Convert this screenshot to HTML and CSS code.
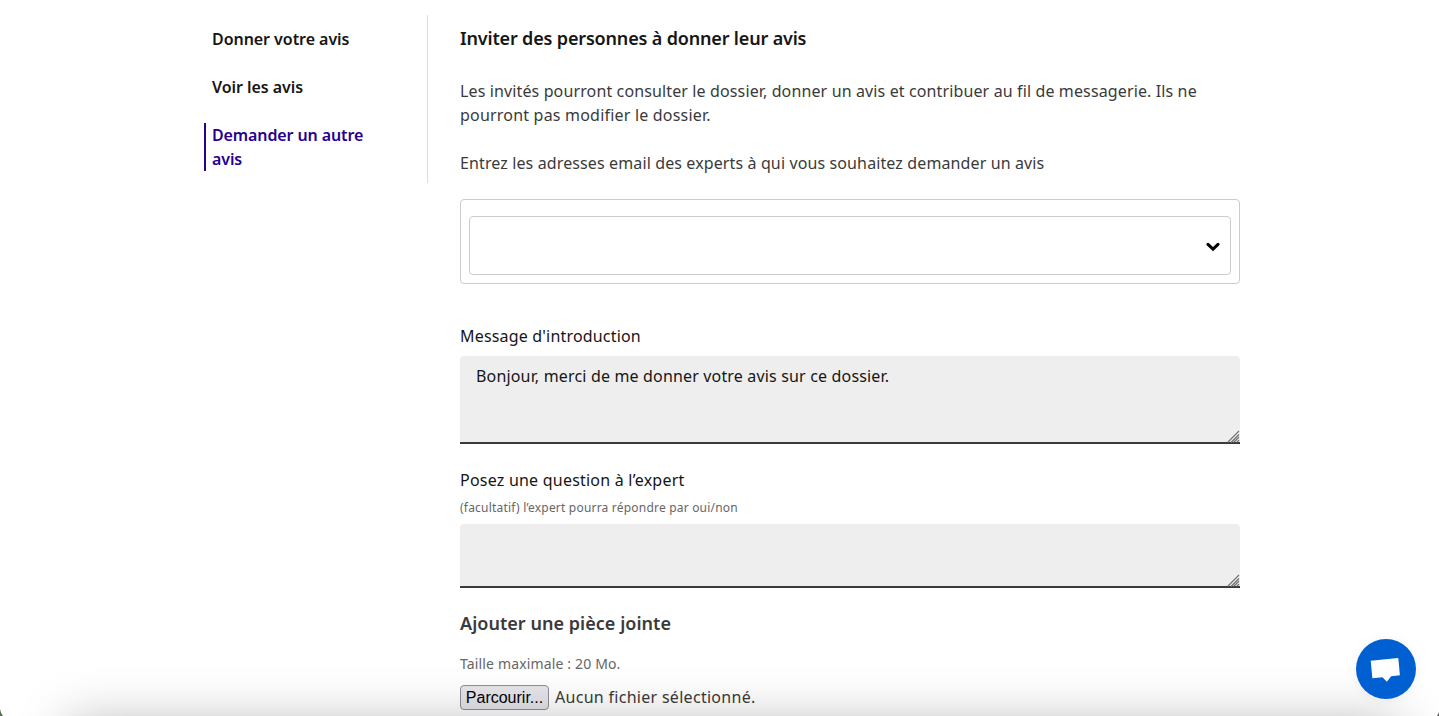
FILE: index.html
```html
<!DOCTYPE html>
<html lang="fr">
<head>
<meta charset="utf-8">
<title>Demander un autre avis</title>
<link rel="stylesheet" href="styles.css">
</head>
<body>
<div class="page">
  <nav class="sidemenu">
    <a class="item"><span class="t-nav1">Donner votre avis</span></a>
    <a class="item"><span class="t-nav2">Voir les avis</span></a>
    <a class="item active"><span class="t-nav3">Demander un autre<br>avis</span></a>
  </nav>
  <main class="content">
    <h1 class="title"><span class="t-title">Inviter des personnes à donner leur avis</span></h1>
    <p class="para"><span class="t-p1">Les invités pourront consulter le dossier, donner un avis et contribuer au fil de messagerie. Ils ne</span><br><span class="t-p2">pourront pas modifier le dossier.</span></p>
    <p class="para"><span class="t-p3">Entrez les adresses email des experts à qui vous souhaitez demander un avis</span></p>
    <div class="combo"><div class="combo-input">
      <svg class="chevron" width="14" height="10" viewBox="0 0 14 10"><path d="M2 2.3 7 7.1 12 2.3" fill="none" stroke="#000" stroke-width="3" stroke-linecap="round"/></svg>
    </div></div>
    <label class="label intro"><span class="t-l1">Message d'introduction</span></label>
    <div class="area area-intro"><span class="t-area">Bonjour, merci de me donner votre avis sur ce dossier.</span>
      <svg class="grip" width="13" height="13" viewBox="0 0 13 13"><path d="M0.5 12.5 12 1M4 12.5 12 4.5M6.5 12.5 12 7M9.5 12.5 12 10" stroke="#707070" stroke-width="1.1" fill="none"/></svg>
    </div>
    <label class="label question"><span class="t-l2">Posez une question à l’expert</span></label>
    <p class="hint"><span class="t-hint">(facultatif) l’expert pourra répondre par oui/non</span></p>
    <div class="area area-question">
      <svg class="grip" width="13" height="13" viewBox="0 0 13 13"><path d="M0.5 12.5 12 1M4 12.5 12 4.5M6.5 12.5 12 7M9.5 12.5 12 10" stroke="#707070" stroke-width="1.1" fill="none"/></svg>
    </div>
    <h2 class="subtitle"><span class="t-sub">Ajouter une pièce jointe</span></h2>
    <p class="size"><span class="t-size">Taille maximale : 20 Mo.</span></p>
    <div class="file"><button class="browse"><span>Parcourir...</span></button><span class="t-file">Aucun fichier sélectionné.</span></div>
  </main>
</div>
<div class="shade"><div class="shade-source"></div></div>
<div class="chat"><svg width="60" height="60" viewBox="0 0 60 60"><path d="M14.7 21.8 42.3 18.9 43.9 36.3 35.2 37.3 30.8 42.8 26.5 38.3 16.4 39.2Z" fill="#fff"/></svg></div>
<svg class="corner left" width="4" height="8" viewBox="0 0 4 8"><path d="M0 1Q.6 5 3 8H0Z" fill="#566d56"/></svg>
<svg class="corner right" width="4" height="8" viewBox="0 0 4 8"><path d="M4 4Q3.4 6 2 8H4Z" fill="#555"/></svg>
</body>
</html>
```
FILE: styles.css
```css
* { box-sizing: border-box; }
body {
  margin: 0;
  height: 716px;
  overflow: hidden;
  position: relative;
  background: #fff;
  color: #3a3a3a;
  font: 16px/24px "Noto Sans", sans-serif;
}
h1, h2, p { margin: 0; }
span { white-space: nowrap; }
.page { display: flex; width: 1036px; margin-left: 204px; padding-top: 15px; }
.sidemenu {
  display: flex;
  flex-direction: column;
  gap: 24px;
  width: 224px;
  height: 168px;
  padding-top: 12px;
  border-right: 1px solid #ddd;
  color: #161616;
  font-weight: 600;
}
.item { display: block; padding-left: 8px; }
.item.active { padding-left: 6px; border-left: 2px solid #270092; color: #270092; }
.content { width: 780px; margin-left: 32px; }
.title { margin: 11px 0 29px; color: #161616; font-size: 18px; line-height: 24px; font-weight: 600; }
.para { margin-bottom: 24px; }
.combo { height: 85px; padding: 16px 8px 8px; border: 1px solid #ccc; border-radius: 4px; }
.combo-input {
  display: flex;
  align-items: center;
  justify-content: flex-end;
  height: 59px;
  padding: 2px 10px 0 0;
  border: 1px solid #ccc;
  border-radius: 4px;
}
.label { display: block; color: #161616; }
.intro { margin-top: 40px; }
.area {
  position: relative;
  margin-top: 8px;
  padding: 8px 16px;
  border-bottom: 2px solid #3a3a3a;
  border-radius: 4px 4px 0 0;
  background: #eee;
  color: #161616;
}
.area-intro { height: 88px; }
.area-question { height: 64px; margin-top: 6px; }
.grip { position: absolute; right: 0; bottom: -1px; }
.question { margin-top: 24px; }
.hint { margin-top: 6px; font-size: 12px; line-height: 20px; color: #666; }
.subtitle { margin-top: 23px; font-size: 18px; line-height: 24px; font-weight: 600; }
.size { margin-top: 17px; font-size: 14px; color: #666; }
.file { display: flex; align-items: flex-start; gap: 6px; margin-top: 9px; height: 25px; }
.browse {
  width: 89px;
  height: 25px;
  padding: 0;
  border: 1px solid #8f8f9d;
  border-radius: 4px;
  background: #e5e5ea;
  color: #000;
  font: 16px/22px "Liberation Sans", sans-serif;
}

/* Tracking per text run */
.t-nav1, .t-nav2 { letter-spacing: -.05px; }
.t-nav3 { letter-spacing: -.11px; }
.t-title { letter-spacing: -.165px; }
.t-p1 { letter-spacing: .126px; }
.t-p2 { letter-spacing: .2px; }
.t-p3 { letter-spacing: .12px; }
.t-l1 { letter-spacing: .18px; }
.t-area { letter-spacing: .165px; }
.t-l2 { letter-spacing: .22px; }
.t-hint { letter-spacing: .2px; }
.t-sub { letter-spacing: .04px; }
.t-size { letter-spacing: .15px; }
.t-file { letter-spacing: .29px; }

.shade { position: absolute; inset: 600px 0 0; overflow: hidden; pointer-events: none; }
.shade-source { margin: 124px 40px 0 68px; height: 300px; box-shadow: 0 0 50px rgba(0, 0, 0, .3); }
.chat { position: absolute; left: 1356px; top: 639px; width: 60px; height: 60px; border-radius: 50%; background: #0060d2; box-shadow: 0 1px 12px rgba(0, 0, 0, .06); }
.corner { position: absolute; bottom: 0; }
.left { left: 0; }
.right { right: 0; }
```
